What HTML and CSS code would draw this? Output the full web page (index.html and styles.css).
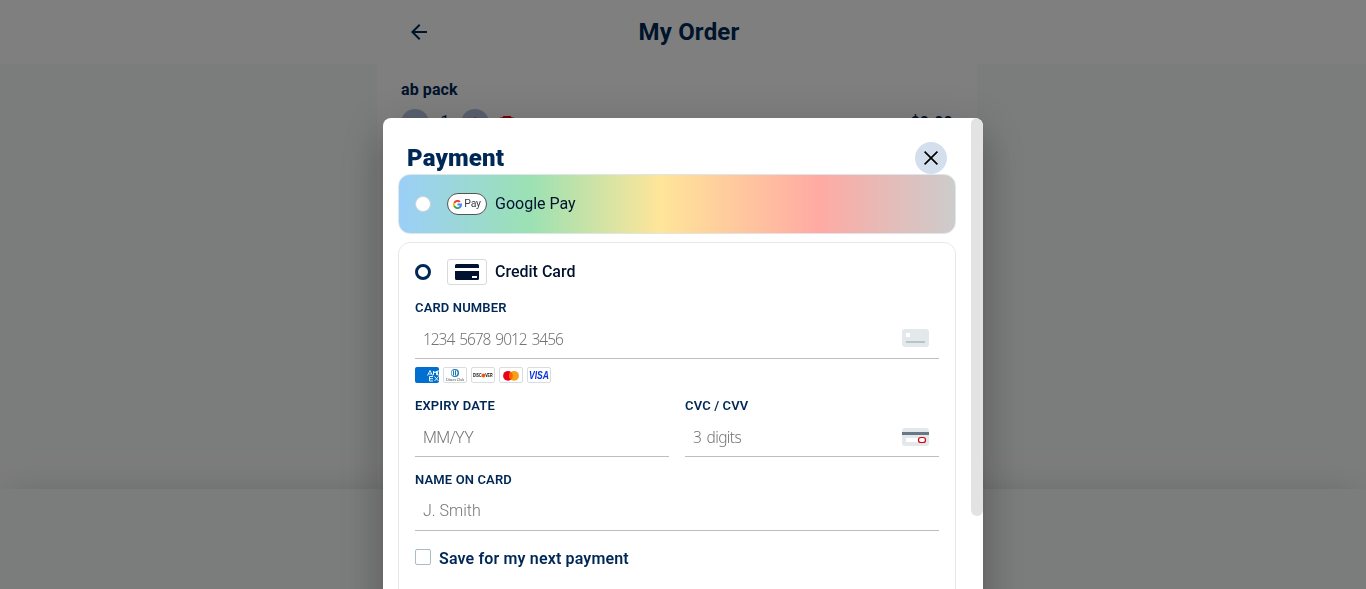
FILE: index.html
```html
<!DOCTYPE html>
<html lang="en">
<head>
<meta charset="utf-8">
<title>My Order</title>
<link rel="stylesheet" href="styles.css">
</head>
<body>
<div class="page">
  <header class="topbar">
    <div class="topbar-inner">
      <svg class="back" width="16" height="16" viewBox="0 0 16 16" fill="none" stroke="#002856" stroke-width="2"><path d="M8.7.7 1.4 8l7.3 7.3M1.4 8H16"/></svg>
      <h1 class="title">My Order</h1>
    </div>
  </header>
  <main class="order">
    <div class="item-name">ab pack</div>
    <div class="item-row">
      <span class="qty-btn">−</span><span class="qty">1</span><span class="qty-btn">+</span>
      <svg class="trash" width="16" height="18" viewBox="0 0 16 18" fill="#f00000"><path d="M1 3V1.600H3L4.500 0h7L13 1.600h2V3zM2 4h12v14H2z"/></svg>
      <span class="price">$0.00</span>
    </div>
  </main>
  <footer class="footer"></footer>
</div>
<div class="overlay">
  <section class="modal">
    <div class="modal-content">
      <div class="modal-head">
        <h2 class="modal-title">Payment</h2>
        <button class="close" aria-label="Close"><svg width="14" height="14" viewBox="0 0 14 14" stroke="#000" stroke-width="1.700"><path d="M.6.6l12.800 12.800M13.400.6.6 13.400"/></svg></button>
      </div>
      <div class="method gpay">
        <span class="radio"></span>
        <span class="gpay-mark">
          <svg width="9" height="9" viewBox="0 0 48 48" fill="none" stroke-width="10"><path stroke="#ea4335" d="M7 16A19 19 0 0 1 37 10"/><path stroke="#fbbc04" d="M7 15A19 19 0 0 0 7 33"/><path stroke="#34a853" d="M7 32A19 19 0 0 0 36 39"/><path stroke="#4285f4" d="M24 24H43Q43 34 35 40"/></svg><span>Pay</span>
        </span>
        <span class="method-name">Google Pay</span>
      </div>
      <div class="card-box">
        <div class="method">
          <span class="radio checked"></span>
          <span class="card-mark"><svg width="24" height="16" viewBox="0 0 24 16"><path fill="#00122f" d="M1.500 0h21Q24 0 24 1.500V4H0V1.500Q0 0 1.500 0zM0 7h24v7.500q0 1.500-1.500 1.500h-21Q0 16 0 14.500z"/><path fill="#fff" d="M17 12h5v2h-5z"/></svg></span>
          <span class="method-name medium">Credit Card</span>
        </div>
        <label class="label">CARD NUMBER</label>
        <div class="field number"><span class="hint digits">1234 5678 9012 3456</span>
          <svg width="27" height="18" viewBox="0 0 27 18"><rect width="27" height="18" rx="3" fill="#e3e8eb"/><path fill="#fff" d="M4 4h4v4H4z"/><path fill="#b5c5cb" d="M4 12h19v2H4z"/></svg>
        </div>
        <div class="brands">
          <svg width="24" height="16" viewBox="0 0 24 16"><rect width="24" height="16" rx="2" fill="#006fcf"/><g fill="none" stroke="#fff" stroke-width=".9"><path d="M12.500 8.500 15 3.500l2.500 5M13.500 7h3M18.500 8V4l1.500 2 1.500-2v4M24 4h-1.500v4H24M18 9.500h-3.500v4.500H18M14.500 11.700H18M19.500 9.500l4 4.500M23.500 9.500l-4 4.500"/></g></svg>
          <svg width="24" height="16" viewBox="0 0 24 16"><rect x=".5" y=".5" width="23" height="15" rx="1.500" fill="#fff" stroke="#d9dddf"/><circle cx="12" cy="6" r="4" fill="#1479b8"/><circle cx="11.500" cy="6" r="3" fill="#fff"/><path d="M10.500 3.500v5M12.500 3.500v5" stroke="#1479b8"/><text x="3" y="13.500" textLength="18" lengthAdjust="spacingAndGlyphs" class="diners">Diners Club</text></svg>
          <svg width="24" height="16" viewBox="0 0 24 16"><rect x=".5" y=".5" width="23" height="15" rx="1.500" fill="#fff" stroke="#d9dddf"/><text x="2" y="10.300" textLength="8.500" lengthAdjust="spacingAndGlyphs" class="disc">DISC</text><circle cx="12.400" cy="8.500" r="1.900" fill="#f15a13"/><text x="14.200" y="10.300" textLength="7.500" lengthAdjust="spacingAndGlyphs" class="disc">VER</text></svg>
          <svg width="24" height="16" viewBox="0 0 24 16"><rect x=".5" y=".5" width="23" height="15" rx="1.500" fill="#fff" stroke="#d9dddf"/><circle cx="9" cy="8.800" r="4.900" fill="#eb001b"/><circle cx="15" cy="8.800" r="4.900" fill="#f79e1b"/><path fill="#ff5f00" d="M12 5a4.800 4.800 0 0 1 0 7.600A4.800 4.800 0 0 1 12 5z"/></svg>
          <svg width="24" height="16" viewBox="0 0 24 16"><rect x=".5" y=".5" width="23" height="15" rx="1.500" fill="#fff" stroke="#d9dddf"/><text x="2" y="12.300" textLength="20" lengthAdjust="spacingAndGlyphs" class="visa">VISA</text></svg>
        </div>
        <div class="pair">
          <div><label class="label">EXPIRY DATE</label><div class="field"><span class="hint expiry">MM/YY</span></div></div>
          <div><label class="label">CVC / CVV</label><div class="field"><span class="hint cvc">3 digits</span>
            <svg width="27" height="18" viewBox="0 0 27 18"><rect width="27" height="18" rx="3" fill="#e3e8eb"/><path fill="#687887" d="M0 4h27v3H0z"/><path fill="#fff" d="M4 10h15v4H4z"/><rect x="16.500" y="9.500" width="7" height="5" rx="2.300" fill="#fff" stroke="#d8000c" stroke-width="1.200"/></svg></div></div>
        </div>
        <label class="label">NAME ON CARD</label>
        <div class="field"><span class="hint">J. Smith</span></div>
        <div class="save"><span class="checkbox"></span><span>Save for my next payment</span></div>
      </div>
    </div>
    <div class="scrollbar"><div class="thumb"></div></div>
  </section>
</div>
</body>
</html>
```
FILE: styles.css
```css
* { box-sizing: border-box; }
body { margin: 0; font-family: Roboto, sans-serif; color: #002856; overflow: hidden; }
h1, h2 { margin: 0; }
svg { display: block; flex: none; }
.page { height: 589px; display: flex; flex-direction: column; background: #f7faf8; }
.topbar { height: 64px; background: #fff; flex: none; }
.topbar-inner { width: 600px; height: 64px; margin-left: 377px; padding-left: 34px; display: flex; align-items: center; }
.title { flex: 1; padding-right: 28px; text-align: center; font-size: 24px; line-height: 32px; font-weight: 700; letter-spacing: .2px; }
.back { margin-right: 2px; }
.order { flex: 1; width: 600px; margin-left: 377px; padding: 16px 24px; background: #fff; }
.item-name { font-size: 16px; line-height: 20px; font-weight: 700; letter-spacing: .1px; }
.item-row { display: flex; align-items: center; margin-top: 9px; height: 28px; }
.qty-btn { width: 28px; height: 28px; border-radius: 50%; background: #b4c2de; text-align: center; line-height: 28px; font-size: 18px; }
.qty { width: 32px; text-align: center; font-size: 16px; line-height: 24px; margin-top: -2px; }
.trash { margin-left: 10px; margin-top: 4px; }
.price { margin-left: auto; font-size: 16px; font-weight: 700; letter-spacing: .25px; margin-top: -1px; }
.footer { position: relative; height: 100px; flex: none; background: #f7faf8; box-shadow: 0 0 40px -10px rgba(0, 0, 0, .22); }
.overlay { position: fixed; inset: 0; padding: 118px 0 0 383px; background: rgba(0, 0, 0, .5); overflow: hidden; }
.modal { width: 600px; height: 600px; display: flex; background: #fff; border-radius: 8px; overflow: hidden; box-shadow: 0 11px 15px -7px rgba(0, 0, 0, .2), 0 24px 38px 3px rgba(0, 0, 0, .14), 0 9px 46px 8px rgba(0, 0, 0, .12); }
.modal-content { width: 588px; padding: 24px 15px 0; }
.modal-head { height: 32px; padding: 0 9px; display: flex; align-items: center; justify-content: space-between; }
.modal-title { font-size: 24px; line-height: 32px; font-weight: 900; letter-spacing: .15px; }
.close { width: 32px; height: 32px; padding: 0; border: 0; border-radius: 50%; background: #d4dfee; display: grid; place-items: center; }
.method { display: flex; align-items: center; color: #00122f; }
.gpay { height: 60px; padding: 0 16px; border: 1px solid #dfe5e8; border-radius: 12px; background: linear-gradient(90deg, #9bcff8, #9be1b3 23.500%, #ffe599 47%, #ffaaa3 75.500%, #ccc); }
.radio { width: 16px; height: 16px; border: 1px solid #ccd6d8; border-radius: 50%; background: #fff; }
.radio.checked { border: 3px solid #002856; }
.gpay-mark { width: 40px; height: 22px; margin: 0 8px 0 16px; border: 1px solid #555; border-radius: 11px; background: #fff; display: flex; align-items: center; justify-content: center; gap: 2px; font-size: 10.5px; line-height: 20px; color: #3c4043; letter-spacing: -.3px; }
.method-name { font-size: 16px; line-height: 24px; }
.medium { font-weight: 500; }
.card-box { height: 500px; margin-top: 8px; padding: 16px; border: 1px solid #e5e8e9; border-radius: 12px; }
.card-mark { width: 40px; height: 26px; margin: 0 8px 0 16px; border: 1px solid #d5dadd; border-radius: 3px; display: grid; place-items: center; }
.label { display: block; margin-top: 13px; font-size: 13px; line-height: 20px; font-weight: 600; letter-spacing: .14px; }
.field { display: flex; align-items: center; justify-content: space-between; height: 41px; padding: 2px 10px 0 8px; border-bottom: 1px solid #bebebe; }
.field.number { padding-top: 0; }
.hint { font-size: 16px; line-height: 20px; font-weight: 300; color: #757575; }
.expiry { letter-spacing: -.65px; padding-top: 2px; }
.digits, .cvc { font-family: "Noto Sans", sans-serif; font-size: 15.5px; }
.digits { padding-top: 2px; letter-spacing: -1.050px; word-spacing: 2px; }
.cvc { letter-spacing: -.65px; word-spacing: 2px; }
.brands { display: flex; gap: 4px; margin-top: 8px; height: 16px; }
.diners { font: 5px "Liberation Serif", serif; fill: #444; }
.disc { font: 700 5px "Liberation Sans", sans-serif; fill: #111; }
.visa { font: italic 700 10px "Liberation Sans", sans-serif; fill: #0a34e0; }
.pair { display: grid; grid-template-columns: 1fr 1fr; gap: 16px; }
.save { display: flex; align-items: center; gap: 8px; margin-top: 16px; font-size: 16px; line-height: 24px; font-weight: 600; letter-spacing: .15px; }
.checkbox { width: 16px; height: 16px; border: 1px solid #a7bcc5; border-radius: 2px; margin-top: -4px; }
.scrollbar { width: 12px; }
.thumb { height: 398px; border-radius: 6px; background: #e3e3e3; }
```
